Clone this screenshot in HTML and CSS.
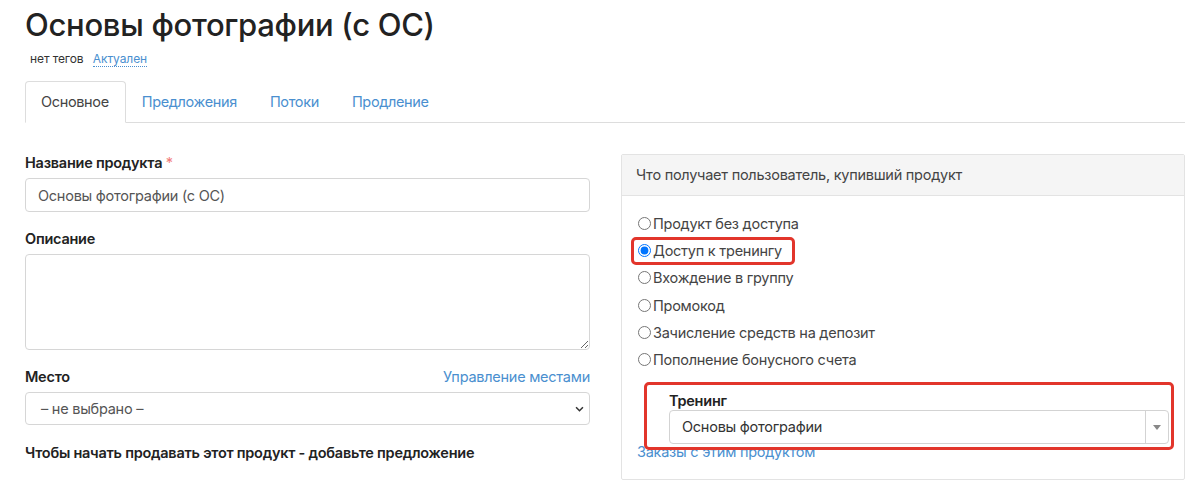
FILE: index.html
```html
<!DOCTYPE html>
<html lang="ru">
<head>
    <meta charset="UTF-8">
    <title>Основы фотографии (с ОС)</title>
    <link rel="stylesheet" href="styles.css">
</head>
<body>
    <div class="page">
        <h1 class="title">Основы фотографии (с ОС)</h1>
        <div class="meta">
            <span class="tags">нет тегов</span>
            <a href="#" class="status">Актуален</a>
        </div>

        <ul class="tabs">
            <li class="active"><a href="#">Основное</a></li>
            <li><a href="#">Предложения</a></li>
            <li><a href="#">Потоки</a></li>
            <li><a href="#">Продление</a></li>
        </ul>

        <div class="columns">
            <div class="left">
                <div class="field">
                    <label class="label">Название продукта <span class="req">*</span></label>
                    <input class="input" type="text" value="Основы фотографии (с ОС)">
                </div>
                <div class="field">
                    <label class="label">Описание</label>
                    <textarea class="input area"></textarea>
                </div>
                <div class="field">
                    <div class="label-row">
                        <label class="label">Место</label>
                        <a href="#">Управление местами</a>
                    </div>
                    <div class="input select">
                        <span>– не выбрано –</span>
                        <svg width="9" height="6" viewBox="0 0 10 7"><path d="M1 1.5 L5 5.5 L9 1.5" fill="none" stroke="#333" stroke-width="1.8"/></svg>
                    </div>
                </div>
                <p class="hint">Чтобы начать продавать этот продукт - добавьте предложение</p>
            </div>

            <div class="panel">
                <div class="panel-head">Что получает пользователь, купивший продукт</div>
                <div class="panel-body">
                    <label class="radio"><input type="radio" name="t"> Продукт без доступа</label>
                    <label class="radio"><input type="radio" name="t" checked> Доступ к тренингу<span class="mark mark-radio"></span></label>
                    <label class="radio"><input type="radio" name="t"> Вхождение в группу</label>
                    <label class="radio"><input type="radio" name="t"> Промокод</label>
                    <label class="radio"><input type="radio" name="t"> Зачисление средств на депозит</label>
                    <label class="radio"><input type="radio" name="t"> Пополнение бонусного счета</label>

                    <div class="training">
                        <label class="label">Тренинг</label>
                        <div class="combo">
                            <span class="combo-text">Основы фотографии</span>
                            <span class="combo-arrow"></span>
                        </div>
                        <span class="mark mark-training"></span>
                    </div>
                    <a href="#" class="orders">Заказы с этим продуктом</a>
                </div>
            </div>
        </div>
    </div>
</body>
</html>
```

FILE: styles.css
```css
body {
    margin: 0;
    font-family: Inter, "Noto Sans", sans-serif;
    font-size: 14.5px;
    letter-spacing: -0.25px;
    color: #333;
    background: #fff;
}

a {
    color: #4a8fcf;
    text-decoration: none;
}

.page {
    width: 1160px;
    padding: 5px 15px 0 25px;
}

.title {
    margin: 0;
    font-size: 31px;
    font-weight: 500;
    line-height: 40px;
    color: #222;
    letter-spacing: -0.3px;
}

.meta {
    margin: 6px 0 0 5px;
    font-size: 12px;
    line-height: 16px;
    letter-spacing: -0.1px;
}

.tags {
    color: #333;
    margin-right: 6px;
}

.status {
    border-bottom: 1px dotted #4a8fcf;
}

.tabs {
    list-style: none;
    margin: 14px 0 0;
    padding: 0;
    display: flex;
    border-bottom: 1px solid #ddd;
}

.tabs li {
    margin-bottom: -1px;
}

.tabs a {
    display: block;
    padding: 11px 16px 11px 15px;
    line-height: 18px;
    letter-spacing: -0.35px;
    border: 1px solid transparent;
    border-radius: 4px 4px 0 0;
}

.tabs .active a {
    color: #444;
    border-color: #ddd #ddd #fff;
    background: #fff;
}

.columns {
    display: grid;
    grid-template-columns: 565px 564px;
    column-gap: 31px;
    margin-top: 31px;
}

.field {
    margin-bottom: 18px;
}

.label {
    display: block;
    font-weight: 600;
    line-height: 18px;
    margin-bottom: 6px;
    color: #222;
}

.req {
    color: #f17c7c;
    font-weight: 400;
}

.label-row {
    display: flex;
    justify-content: space-between;
    align-items: baseline;
}

.input {
    display: block;
    box-sizing: border-box;
    width: 100%;
    height: 34px;
    padding: 0 12px;
    border: 1px solid #d6d6d6;
    border-radius: 4px;
    font: inherit;
    letter-spacing: inherit;
    color: #555;
}

.area {
    height: 96px;
    resize: vertical;
}

.select {
    display: flex;
    align-items: center;
    justify-content: space-between;
    height: 33px;
    padding: 0 5px 0 15px;
}

.hint {
    margin: 19px 0 0;
    font-weight: 600;
    color: #222;
}

.panel {
    border: 1px solid #e3e3e3;
    border-radius: 2px;
    height: 326px;
    box-sizing: border-box;
}

.panel-head {
    background: #f5f5f5;
    border-bottom: 1px solid #e3e3e3;
    padding: 11px 14px 11px;
    line-height: 18px;
    color: #444;
}

.panel-body {
    padding: 14px 15px 0 15px;
}

.radio {
    display: flex;
    align-items: center;
    height: 27.2px;
    color: #444;
    position: relative;
    width: max-content;
}

.radio input {
    margin: 0 2px 0 1px;
    width: 13px;
    height: 13px;
}

.mark {
    position: absolute;
    border: 3px solid #e2352b;
    border-radius: 5px;
    pointer-events: none;
}

.mark-radio {
    left: -6px;
    right: -13px;
    top: 0;
    bottom: -1px;
}

.training {
    position: relative;
    margin: 20px 0 0 32px;
}

.training .label {
    line-height: 16px;
    margin-bottom: 1px;
}

.combo {
    display: flex;
    height: 34px;
    border: 1px solid #d3d3d3;
    border-radius: 4px;
    box-sizing: border-box;
    color: #333;
}

.combo-text {
    flex: 1;
    padding: 7px 12px;
}

.combo-arrow {
    width: 22px;
    border-left: 1px solid #d3d3d3;
    position: relative;
}

.combo-arrow::after {
    content: "";
    position: absolute;
    left: 7px;
    top: 14px;
    border-left: 4px solid transparent;
    border-right: 4px solid transparent;
    border-top: 5px solid #888;
}

.mark-training {
    left: -25px;
    right: -5px;
    top: -11px;
    bottom: -6px;
}

.orders {
    display: block;
    margin-top: -1px;
}
```
